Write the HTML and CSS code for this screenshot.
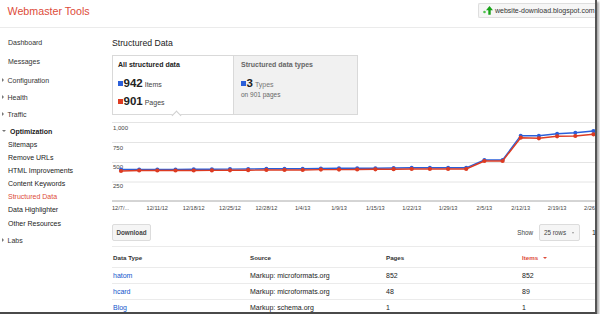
FILE: index.html
```html
<!DOCTYPE html>
<html lang="en">
  <head>
    <meta charset="UTF-8" />
    <meta name="viewport" content="width=device-width, initial-scale=1.0" />
    <title>Webmaster Tools - Structured Data</title>
    <link rel="stylesheet" href="styles.css">
  </head>
  <body>
    <div class="frame">
      <!-- Top bar -->
      <header class="topbar">
        <div class="brand">Webmaster Tools</div>
        <div class="site-badge">
          <svg class="site-icon" width="10" height="9" viewBox="0 0 10 9">
            <circle cx="1.5" cy="6" r="1.3" fill="#4cc24c" />
            <polygon points="3,4.2 6.5,0 10,4.2 7.7,4.2 7.7,8.8 5.3,8.8 5.3,4.2" fill="#17a217" />
          </svg>
          <span>website-download.blogspot.com</span>
        </div>
      </header>

      <div class="layout">
        <!-- Side navigation -->
        <nav class="sidebar">
          <ul class="nav">
            <li class="nav-item">Dashboard</li>
            <li class="nav-item">Messages</li>
            <li class="nav-item nav-section">Configuration</li>
            <li class="nav-item nav-section">Health</li>
            <li class="nav-item nav-section">Traffic</li>
            <li class="nav-item nav-section open">
              <span class="nav-title">Optimization</span>
              <ul class="subnav">
                <li>Sitemaps</li>
                <li>Remove URLs</li>
                <li>HTML Improvements</li>
                <li>Content Keywords</li>
                <li class="active">Structured Data</li>
                <li>Data Highlighter</li>
                <li>Other Resources</li>
              </ul>
            </li>
            <li class="nav-item nav-section">Labs</li>
          </ul>
        </nav>

        <!-- Main content -->
        <main class="content">
          <h1 class="page-title">Structured Data</h1>

          <div class="summary">
            <div class="summary-tab active">
              <div class="tab-title">All structured data</div>
              <div class="stat">
                <span class="swatch blue"></span><span class="stat-num">942</span><span class="stat-label">Items</span>
              </div>
              <div class="stat">
                <span class="swatch red"></span><span class="stat-num">901</span><span class="stat-label">Pages</span>
              </div>
            </div>
            <div class="summary-tab types">
              <div class="tab-title">Structured data types</div>
              <div class="stat">
                <span class="swatch blue"></span><span class="stat-num">3</span><span class="stat-label">Types</span>
              </div>
              <div class="stat-sub">on 901 pages</div>
            </div>
          </div>

          <svg class="chart" width="484" height="95" viewBox="0 0 484 95">
            <defs>
              <marker id="dot-blue" markerWidth="6" markerHeight="6" refX="3" refY="3" markerUnits="userSpaceOnUse">
                <circle cx="3" cy="3" r="2" fill="#2b5fd9" />
              </marker>
              <marker id="dot-red" markerWidth="6" markerHeight="6" refX="3" refY="3" markerUnits="userSpaceOnUse">
                <circle cx="3" cy="3" r="2.1" fill="#dd3b22" />
              </marker>
            </defs>

            <g class="grid">
              <line x1="0" y1="4.5" x2="484" y2="4.5" />
              <line x1="0" y1="24.5" x2="484" y2="24.5" />
              <line x1="0" y1="44.5" x2="484" y2="44.5" />
              <line x1="0" y1="64" x2="484" y2="64" />
            </g>
            <line class="axis" x1="0" y1="83" x2="484" y2="83" />

            <g class="y-labels">
              <text x="1" y="12.3">1,000</text>
              <text x="1" y="31.8">750</text>
              <text x="1" y="50.8">500</text>
              <text x="1" y="70">250</text>
            </g>

            <polyline class="series blue" marker-start="url(#dot-blue)" marker-mid="url(#dot-blue)" marker-end="url(#dot-blue)"
              points="9,51.5 27.2,51.5 45.3,51.4 63.5,51.4 81.7,51.3 99.9,51.2 118,51.1 136.2,51 154.4,50.8 172.5,50.8 190.7,50.8 208.9,50.5 227,50.3 245.2,50.3 263.4,50.2 281.6,50 299.7,49.8 317.9,49.8 336.1,49.8 354.2,49.8 372.4,42 390.6,42 408.7,17.7 426.9,17.7 445.1,15.7 463.3,14.7 481.4,13" />
            <polyline class="series red" marker-start="url(#dot-red)" marker-mid="url(#dot-red)" marker-end="url(#dot-red)"
              points="9,53 27.2,52.5 45.3,52.5 63.5,52.5 81.7,52.5 99.9,52.4 118,52.3 136.2,52.2 154.4,52 172.5,52 190.7,52 208.9,51.6 227,51.6 245.2,51.5 263.4,51.3 281.6,51.2 299.7,51 317.9,51 336.1,51 354.2,51 372.4,43 390.6,43 408.7,19.7 426.9,20.3 445.1,18.3 463.3,18 481.4,16.3" />

            <g class="x-labels">
              <text x="0" y="91.5" class="first">12/7/...</text>
              <text x="45.3" y="91.5">12/11/12</text>
              <text x="81.7" y="91.5">12/18/12</text>
              <text x="118" y="91.5">12/25/12</text>
              <text x="154.4" y="91.5">12/28/12</text>
              <text x="190.7" y="91.5">1/4/13</text>
              <text x="227" y="91.5">1/9/13</text>
              <text x="263.4" y="91.5">1/15/13</text>
              <text x="299.7" y="91.5">1/22/13</text>
              <text x="336.1" y="91.5">1/29/13</text>
              <text x="372.4" y="91.5">2/5/13</text>
              <text x="408.7" y="91.5">2/12/13</text>
              <text x="445.1" y="91.5">2/19/13</text>
              <text x="481.4" y="91.5">2/26/13</text>
            </g>
          </svg>

          <div class="toolbar">
            <button class="btn">Download</button>
            <div class="pager-group">
              <span class="show-label">Show</span>
              <div class="rows-select">25 rows <span class="caret"></span></div>
              <span class="pager">1 - 3 of 3</span>
            </div>
          </div>

          <table class="data-table">
            <thead>
              <tr>
                <th class="col-type">Data Type</th>
                <th class="col-source">Source</th>
                <th class="col-pages">Pages</th>
                <th class="sorted">Items <span class="sort-arrow"></span></th>
              </tr>
            </thead>
            <tbody>
              <tr>
                <td><a href="#">hatom</a></td>
                <td>Markup: microformats.org</td>
                <td>852</td>
                <td>852</td>
              </tr>
              <tr>
                <td><a href="#">hcard</a></td>
                <td>Markup: microformats.org</td>
                <td>48</td>
                <td>89</td>
              </tr>
              <tr>
                <td><a href="#">Blog</a></td>
                <td>Markup: schema.org</td>
                <td>1</td>
                <td>1</td>
              </tr>
            </tbody>
          </table>
        </main>
      </div>
    </div>
  </body>
</html>
```

FILE: styles.css
```css
/* General Styles */
body {
  font-family: "Liberation Sans", Arial, sans-serif;
  margin: 0;
  padding: 0;
  background-color: white;
  color: #222;
}

/* Screenshot window frame with its drop shadow */
.frame {
  width: 595px;
  height: 312px;
  background-color: white;
  border-right: 2px solid #555;
  border-bottom: 2px solid #4a4a4a;
  box-shadow: 2px 2px 2px #aaa;
  overflow: hidden;
}

/* Top Bar */
.topbar {
  display: flex;
  justify-content: space-between;
  align-items: flex-start;
  height: 27px;
  border-bottom: 1px solid #ebebeb;
}

.brand {
  color: #dd4b39;
  font-size: 10.7px;
  line-height: 13px;
  padding: 5px 0 0 7.5px;
}

.site-badge {
  display: flex;
  align-items: center;
  gap: 2px;
  margin-top: 3px;
  height: 13px;
  padding: 0 0 0 4px;
  width: 112px;
  border: 1px solid #dedede;
  border-right: none;
  border-radius: 2px 0 0 2px;
  background-color: #f6f6f6;
  font-size: 7px;
  color: #333;
  white-space: nowrap;
}

.site-icon {
  flex-shrink: 0;
}

/* Layout */
.layout {
  display: flex;
}

/* Sidebar */
.sidebar {
  width: 112px;
  flex-shrink: 0;
}

.nav,
.subnav {
  list-style: none;
  margin: 0;
  padding: 0;
}

.nav {
  padding: 8px 0 0 8px;
  font-size: 7px;
  color: #333;
}

.nav-item {
  line-height: 13px;
  margin-bottom: 6px;
}

.nav-section {
  margin-bottom: 4px;
}

.nav-section::before {
  content: "";
  display: inline-block;
  vertical-align: 1px;
  margin: 0 3.5px 0 -6px;
  border-left: 2.5px solid #777;
  border-top: 2px solid transparent;
  border-bottom: 2px solid transparent;
}

.nav-section.open::before {
  vertical-align: 2px;
  margin: 0 2.3px 0 -6.3px;
  border-top: 2.5px solid #777;
  border-left: 2px solid transparent;
  border-right: 2px solid transparent;
  border-bottom: none;
}

.nav-title {
  font-weight: bold;
  color: #222;
}

.subnav li {
  line-height: 13.1px;
  color: #222;
}

.subnav li.active {
  color: #dd4b39;
}

/* Main Content */
.content {
  flex: 1;
  padding-top: 10px;
  min-width: 0;
}

.page-title {
  font-size: 8.7px;
  font-weight: normal;
  line-height: 11px;
  margin: 0 0 6px;
  color: #222;
}

/* Summary tabs */
.summary {
  display: flex;
  width: 246px;
  height: 60px;
  box-sizing: border-box;
  border: 1px solid #d9d9d9;
}

.summary-tab {
  position: relative;
  padding: 4px 5px;
}

.summary-tab.active {
  width: 121px;
  box-sizing: border-box;
  border-right: 1px solid #d9d9d9;
}

/* little notch under the selected tab */
.summary-tab.active::after {
  content: "";
  position: absolute;
  left: 60px;
  bottom: -4.5px;
  width: 6px;
  height: 6px;
  background-color: white;
  border-left: 1px solid #cfcfcf;
  border-top: 1px solid #cfcfcf;
  transform: rotate(45deg);
  z-index: 1;
}

.summary-tab.types {
  flex: 1;
  padding-left: 7px;
  background-color: #f1f1f1;
}

.tab-title {
  font-size: 7px;
  font-weight: bold;
  line-height: 10px;
}

.types .tab-title {
  color: #666;
}

.stat {
  display: flex;
  align-items: center;
  height: 18px;
  margin-top: 4px;
}

.stat + .stat {
  margin-top: 0;
}

.types .stat {
  height: 13px;
  margin-top: 6.5px;
}

.swatch {
  width: 4.5px;
  height: 4.5px;
  margin: 1px 1px 0 0;
}

.swatch.blue {
  background-color: #2b5fd9;
}

.swatch.red {
  background-color: #dd3b22;
}

.stat-num {
  font-size: 11.5px;
  font-weight: bold;
  color: #222;
}

.stat-label {
  font-size: 7px;
  color: #444;
  margin: 2px 0 0 2px;
}

.types .stat-label {
  color: #777;
}

.stat-sub {
  font-size: 6.5px;
  line-height: 9px;
  color: #666;
}

/* Chart */
.chart {
  display: block;
  margin-top: 3px;
  overflow: hidden;
}

.chart .grid line {
  stroke: #e4e4e4;
  stroke-width: 1;
}

.chart .axis {
  stroke: #aaa;
  stroke-width: 1;
}

.chart text {
  font-family: "Liberation Sans", Arial, sans-serif;
  fill: #444;
}

.chart .y-labels text {
  font-size: 6px;
}

.chart .x-labels text {
  font-size: 5.6px;
  text-anchor: middle;
}

.chart .x-labels text.first {
  text-anchor: start;
}

.chart .series {
  fill: none;
  stroke-width: 1.4;
}

.chart .series.blue {
  stroke: #2b5fd9;
}

.chart .series.red {
  stroke: #dd3b22;
}

/* Toolbar */
.toolbar {
  display: flex;
  align-items: center;
  margin-top: 11px;
  height: 17px;
}

.btn {
  width: 39px;
  height: 17px;
  padding: 0;
  font-family: inherit;
  font-size: 6.3px;
  font-weight: bold;
  color: #444;
  background-color: #f5f5f5;
  border: 1px solid #dcdcdc;
  border-radius: 2px;
}

.pager-group {
  display: flex;
  align-items: center;
  margin-left: auto;
  font-size: 6.3px;
  color: #444;
}

.rows-select {
  display: flex;
  align-items: center;
  width: 41px;
  height: 17px;
  box-sizing: border-box;
  margin-left: 6px;
  padding-left: 4px;
  background-color: #f5f5f5;
  border: 1px solid #dcdcdc;
  border-radius: 2px;
  color: #444;
}

.caret {
  margin-left: 6px;
  border-top: 2px solid #999;
  border-left: 1.5px solid transparent;
  border-right: 1.5px solid transparent;
}

.pager {
  width: 3px;
  margin-left: 12px;
  white-space: nowrap;
  font-size: 7px;
  color: #222;
}

/* Data table */
.data-table {
  width: 100%;
  margin-top: 5px;
  border-collapse: collapse;
  border-top: 1px solid #ebebeb;
  font-size: 7px;
}

.data-table th {
  height: 20px;
  padding: 0 0 0 1px;
  text-align: left;
  font-size: 6.2px;
  font-weight: bold;
  color: #333;
  border-bottom: 1px solid #ebebeb;
}

.data-table .col-type {
  width: 136px;
}

.data-table .col-source,
.data-table .col-pages {
  width: 135px;
}

.data-table th.sorted {
  color: #dd4b39;
}

.sort-arrow {
  display: inline-block;
  vertical-align: 1px;
  margin-left: 3px;
  border-top: 2.5px solid #dd4b39;
  border-left: 2px solid transparent;
  border-right: 2px solid transparent;
}

.data-table td {
  height: 15px;
  padding: 0 0 0 1px;
  color: #222;
  border-bottom: 1px solid #ebebeb;
}

.data-table a {
  color: #1155cc;
  text-decoration: none;
}
```
